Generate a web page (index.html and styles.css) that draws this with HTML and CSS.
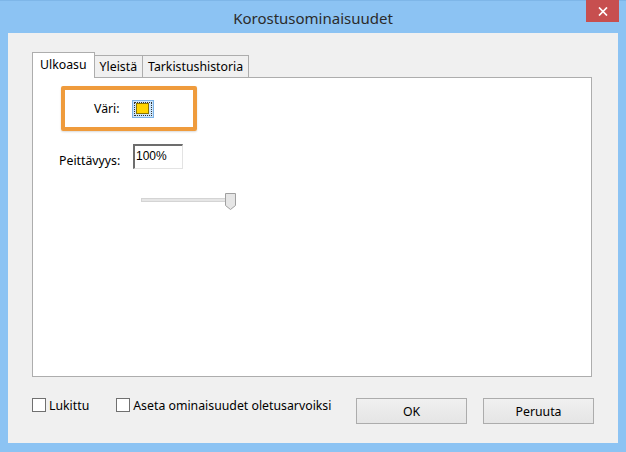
FILE: index.html
```html
<!DOCTYPE html>
<html lang="fi">
<head>
<meta charset="utf-8">
<title>Korostusominaisuudet</title>
<link rel="stylesheet" href="styles.css">
</head>
<body>
<div class="window">
  <div class="titlebar">
    <span class="title">Korostusominaisuudet</span>
    <button class="close" aria-label="Sulje">
      <svg width="10" height="9" viewBox="0 0 10 9"><path d="M1 0.5 L9 8.5 M9 0.5 L1 8.5" stroke="#fff" stroke-width="1.7" fill="none"/></svg>
    </button>
  </div>
  <div class="client">
    <div class="tabs">
      <div class="tab selected">Ulkoasu</div>
      <div class="tab">Yleistä</div>
      <div class="tab">Tarkistushistoria</div>
    </div>
    <div class="panel">
      <div class="highlight">
        <span class="label">Väri:</span>
        <span class="swatch"><span class="focus"><span class="yellow"></span></span></span>
      </div>
      <div class="row">
        <span class="label">Peittävyys:</span>
        <span class="input">100%</span>
      </div>
      <div class="slider">
        <span class="track"></span>
        <svg class="thumb" width="11" height="17" viewBox="0 0 11 17"><path d="M0.5 0.5 H10.5 V12.5 L5.5 16.5 L0.5 12.5 Z" fill="#e6e6e6" stroke="#a0a0a0"/></svg>
      </div>
    </div>
    <div class="footer">
      <label class="check"><span class="box"></span>Lukittu</label>
      <label class="check second"><span class="box"></span>Aseta ominaisuudet oletusarvoiksi</label>
      <div class="buttons">
        <button class="btn">OK</button>
        <button class="btn">Peruuta</button>
      </div>
    </div>
  </div>
</div>
</body>
</html>
```
FILE: styles.css
```css
* { box-sizing: border-box; }
html, body { margin: 0; padding: 0; }
body {
  width: 626px;
  height: 452px;
  overflow: hidden;
  font-family: "Noto Sans", "Open Sans", sans-serif;
  font-size: 12.3px;
  color: #000;
}
.window {
  width: 626px;
  height: 452px;
  background: #8cc3f3;
  border-top: 1px solid #7eb6e8;
  padding: 0 8px 9px 8px;
  display: flex;
  flex-direction: column;
}
.titlebar {
  position: relative;
  height: 32px;
  display: flex;
  align-items: center;
  justify-content: center;
}
.title {
  font-size: 15px;
  color: #2b2b2b;
  margin-top: 2px;
}
.close {
  position: absolute;
  right: -1px;
  top: -1px;
  width: 33px;
  height: 22px;
  border: 0;
  padding: 0;
  background: #c74f4f;
  display: flex;
  align-items: center;
  justify-content: center;
}
.client {
  flex: 1;
  background: #f0f0f0;
  padding: 19px 26px 0 24px;
  display: flex;
  flex-direction: column;
}
.tabs {
  display: flex;
  align-items: flex-end;
  height: 25px;
  position: relative;
  z-index: 1;
}
.tab {
  height: 22px;
  padding: 0 5px;
  border: 1px solid #adadad;
  border-bottom: 0;
  background: #f0f0f0;
  display: flex;
  align-items: center;
  margin-left: -1px;
  white-space: nowrap;
}
.tab.selected {
  height: 26px;
  margin-bottom: -1px;
  margin-left: 0;
  padding: 0 7px 2px 7px;
  background: #fff;
}
.panel {
  height: 300px;
  background: #fff;
  border: 1px solid #adadad;
  padding: 8px 0 0 28px;
}
.highlight {
  width: 136px;
  height: 45px;
  border: 4px solid #ef9b3c;
  border-radius: 2px;
  box-shadow: 0 1px 2px rgba(0,0,0,0.15);
  display: flex;
  align-items: center;
  padding: 0 0 0 29px;
  gap: 12px;
}
.swatch {
  width: 22px;
  height: 18px;
  background: #cde6fb;
  border: 1px solid #7db3e6;
  padding: 1px;
  display: flex;
}
.focus {
  flex: 1;
  border: 1px dotted #333;
  display: flex;
  align-items: center;
  justify-content: center;
}
.yellow {
  width: 13px;
  height: 11px;
  background: #ffd500;
  border: 1px solid #8a7400;
}
.row {
  display: flex;
  align-items: flex-start;
  margin-top: 13px;
  margin-left: -2px;
}
.row .label {
  margin-top: 8px;
  width: 74px;
}
.input {
  width: 50px;
  height: 25px;
  border-top: 2px solid #6d6d6d;
  border-left: 2px solid #6d6d6d;
  border-right: 1px solid #e3e3e3;
  border-bottom: 1px solid #e3e3e3;
  padding: 3px 0 0 1px;
  font-family: "Liberation Sans", Arial, sans-serif;
  font-size: 12px;
}
.slider {
  position: relative;
  margin: 24px 0 0 80px;
  width: 96px;
  height: 17px;
  display: flex;
  align-items: center;
}
.track {
  width: 91px;
  height: 4px;
  background: #e6e6e6;
  border: 1px solid #d4d4d4;
  margin-top: -3px;
}
.thumb {
  position: absolute;
  left: 84px;
  top: 0;
}
.footer {
  display: flex;
  align-items: flex-start;
  margin-top: 21px;
  margin-right: -2px;
}
.check {
  display: flex;
  align-items: center;
  gap: 3px;
  height: 14px;
}
.check.second { margin-left: 27px; }
.box {
  width: 14px;
  height: 14px;
  background: #fff;
  border: 1px solid #707070;
}
.buttons {
  margin-left: auto;
  display: flex;
  gap: 16px;
}
.btn {
  width: 111px;
  height: 26px;
  border: 1px solid #acacac;
  background: linear-gradient(#f0f0f0, #e5e5e5);
  font-family: inherit;
  font-size: 12.3px;
  color: #000;
  padding: 0;
}
```
